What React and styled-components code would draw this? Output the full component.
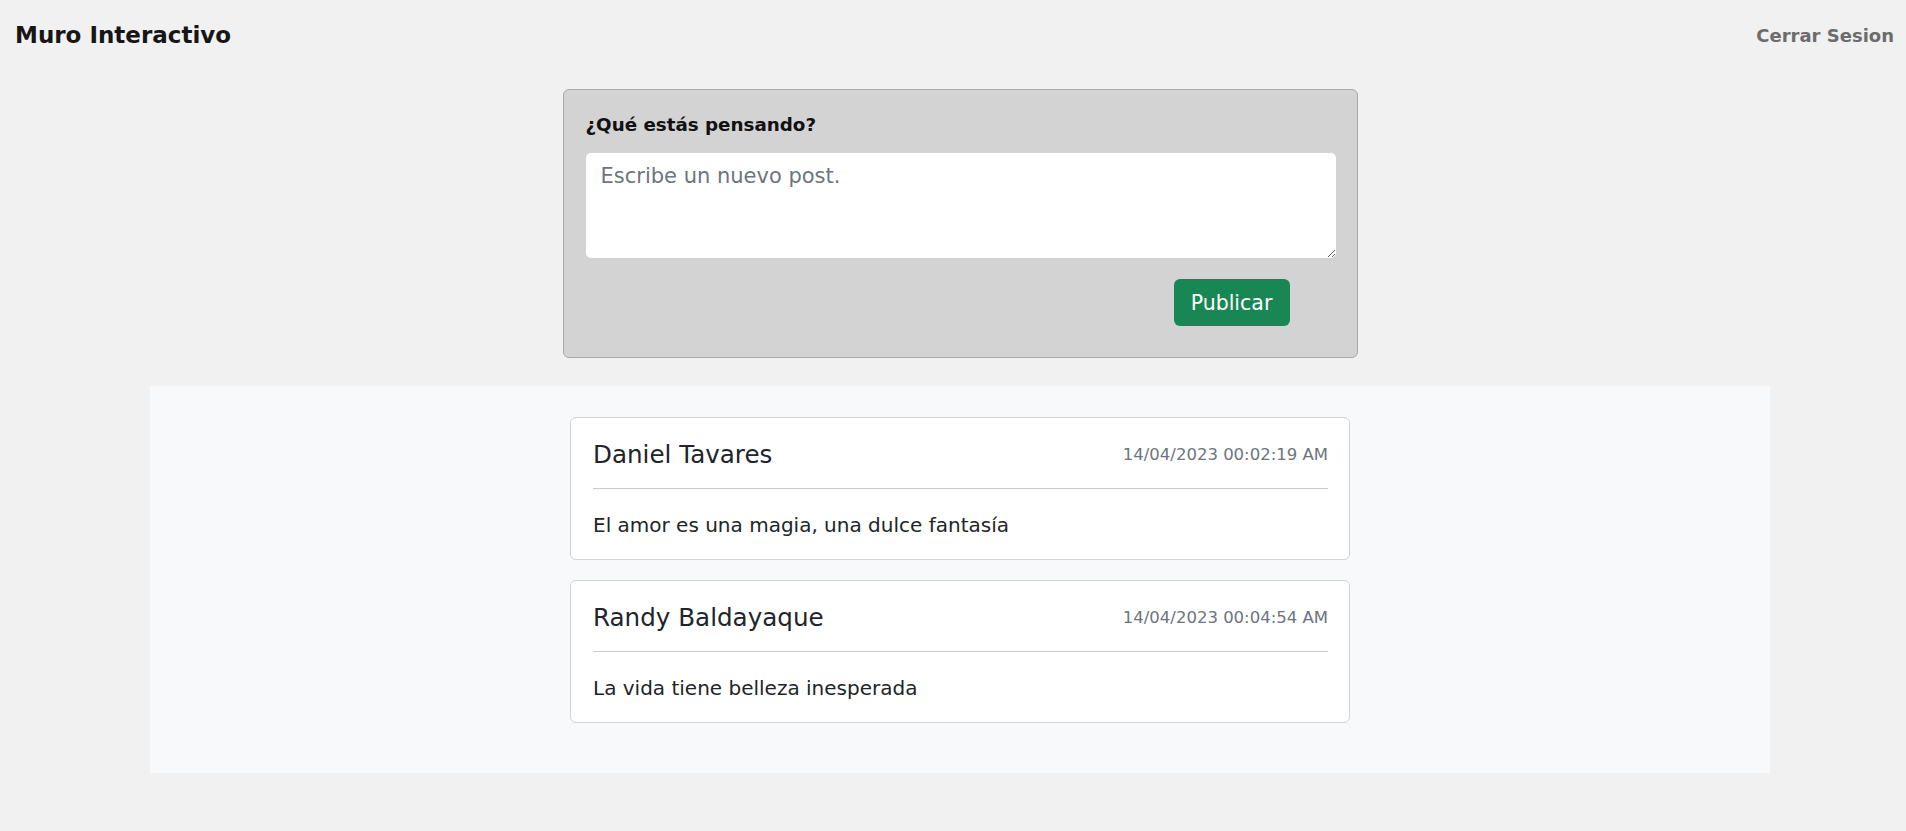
import { useState } from "react";
import styled, { createGlobalStyle } from "styled-components";

const GlobalStyle = createGlobalStyle`
  * {
    box-sizing: border-box;
  }
  body {
    margin: 0;
    background-color: #f1f1f1;
    font-family: "DejaVu Sans", "Noto Sans", sans-serif;
    color: #212529;
  }
`;

const Header = styled.header`
  display: flex;
  align-items: center;
  justify-content: space-between;
  height: 70px;
  padding: 0 12px 0 15px;
`;

const Brand = styled.h1`
  margin: 0;
  font-size: 23px;
  font-weight: 700;
  color: #161616;
`;

const Logout = styled.a`
  font-size: 18px;
  font-weight: 700;
  color: #6c6c6c;
  text-decoration: none;
  cursor: pointer;
`;

const Main = styled.main`
  display: flex;
  flex-direction: column;
  align-items: center;
  margin-top: 19px;
  padding-left: 14px;
`;

const FormCard = styled.form`
  width: 795px;
  background-color: #d3d3d3;
  border: 1px solid #a9a9a9;
  border-radius: 6px;
  padding: 22px 21px 31px 22px;
`;

const FormTitle = styled.h2`
  margin: 0 0 15px 0;
  font-size: 18.3px;
  line-height: 26px;
  font-weight: 700;
  color: #111;
`;

const TextArea = styled.textarea`
  display: block;
  width: 100%;
  height: 105px;
  border: none;
  border-radius: 5px;
  background: #fff;
  padding: 9px 15px;
  font-family: inherit;
  font-size: 21px;
  line-height: 1.4;
  color: #212529;
  outline: none;

  &::placeholder {
    color: #6c757d;
  }
`;

const Actions = styled.div`
  display: flex;
  justify-content: flex-end;
  margin-top: 21px;
  padding-right: 46px;
`;

const Button = styled.button`
  width: 116px;
  height: 47px;
  border: none;
  border-radius: 6px;
  background-color: #198754;
  color: #fff;
  font-family: inherit;
  font-size: 20.5px;
  cursor: pointer;
`;

const Feed = styled.section`
  display: flex;
  flex-direction: column;
  align-items: center;
  gap: 20px;
  width: 1620px;
  margin-top: 28px;
  padding: 31px 0 50px 0;
  background-color: #f8f9fa;
`;

const PostCard = styled.article`
  width: 780px;
  background: #fff;
  border: 1px solid #d3d3d3;
  border-radius: 6px;
  padding: 19px 21px 20px 22px;
`;

const PostHead = styled.div`
  display: flex;
  align-items: center;
  justify-content: space-between;
  height: 34px;
`;

const Author = styled.span`
  font-size: 24.6px;
  color: #212529;
`;

const Stamp = styled.span`
  font-size: 16.5px;
  color: #6c757d;
`;

const Divider = styled.hr`
  margin: 17px 0 22px 0;
  border: none;
  border-top: 1px solid #c8c8c8;
`;

const PostText = styled.p`
  margin: 0;
  font-size: 20px;
  line-height: 28px;
  color: #212529;
`;

const posts = [
  {
    id: 1,
    author: "Daniel Tavares",
    date: "14/04/2023 00:02:19 AM",
    text: "El amor es una magia, una dulce fantasía",
  },
  {
    id: 2,
    author: "Randy Baldayaque",
    date: "14/04/2023 00:04:54 AM",
    text: "La vida tiene belleza inesperada",
  },
];

export default function App() {
  const [draft, setDraft] = useState("");

  return (
    <>
      <GlobalStyle />
      <Header>
        <Brand>Muro Interactivo</Brand>
        <Logout>Cerrar Sesion</Logout>
      </Header>
      <Main>
        <FormCard onSubmit={(e) => e.preventDefault()}>
          <FormTitle>¿Qué estás pensando?</FormTitle>
          <TextArea
            placeholder="Escribe un nuevo post."
            value={draft}
            onChange={(e) => setDraft(e.target.value)}
          />
          <Actions>
            <Button type="submit">Publicar</Button>
          </Actions>
        </FormCard>
        <Feed>
          {posts.map((p) => (
            <PostCard key={p.id}>
              <PostHead>
                <Author>{p.author}</Author>
                <Stamp>{p.date}</Stamp>
              </PostHead>
              <Divider />
              <PostText>{p.text}</PostText>
            </PostCard>
          ))}
        </Feed>
      </Main>
    </>
  );
}
